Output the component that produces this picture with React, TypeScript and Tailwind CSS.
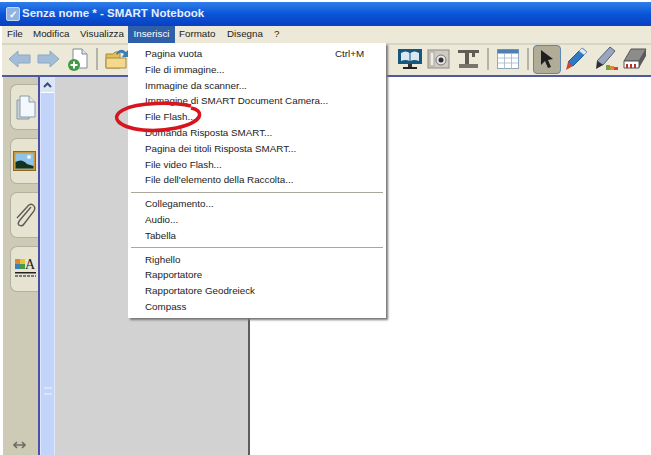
import React from 'react';

const font = { fontFamily: '"Liberation Sans", Tahoma, sans-serif' };

const menuBar = [
  { label: 'File', w: 'ml-[5px] w-[26px]' },
  { label: 'Modifica', w: 'w-[47px]' },
  { label: 'Visualizza', w: 'w-[48px]' },
];

const menuGroups: string[][] = [
  [
    'Pagina vuota',
    'File di immagine...',
    'Immagine da scanner...',
    'Immagine di SMART Document Camera...',
    'File Flash...',
    'Domanda Risposta SMART...',
    'Pagina dei titoli Risposta SMART...',
    'File video Flash...',
    "File dell'elemento della Raccolta...",
  ],
  ['Collegamento...', 'Audio...', 'Tabella'],
  ['Righello', 'Rapportatore', 'Rapportatore Geodreieck', 'Compass'],
];

const Arrow: React.FC<{ flip?: boolean }> = ({ flip }) => (
  <svg width="23" height="18" viewBox="0 0 23 18" className={flip ? '-scale-x-100' : ''}>
    <path d="M1 9 L10 1 V5 H22 V13 H10 V17 Z" fill="#a3bdd8" stroke="#8ba7c4" />
  </svg>
);

const NewPage = () => (
  <svg width="22" height="25" viewBox="0 0 22 25">
    <path d="M6 2 H15 L20 7 V21 H6 Z" fill="#fff" stroke="#7f8a99" />
    <path d="M15 2 V7 H20" fill="#dfe6ee" stroke="#7f8a99" />
    <circle cx="7" cy="18" r="6" fill="#3e9a45" />
    <path d="M7 14.5 V21.5 M3.5 18 H10.5" stroke="#fff" strokeWidth="2" />
  </svg>
);

const Folder = () => (
  <svg width="24" height="24" viewBox="0 0 24 24">
    <path d="M1 7 H8 L10 5 H15 V21 H1 Z" fill="#e5bd5c" stroke="#a98b3c" />
    <path d="M1 11 H21 V21 H1 Z" fill="#f2d98e" stroke="#a98b3c" />
    <path d="M11 6 Q16 0 21 5 L23 3 V10 H17 L19 7 Q15 4 12 8 Z" fill="#3b7fb8" />
  </svg>
);

const Display = () => (
  <svg width="26" height="24" viewBox="0 0 26 24">
    <rect x="1" y="2" width="24" height="15" fill="#16577f" />
    <path d="M4 6 Q9 3 12.5 6 V14 Q9 12 4 14 Z M13.5 6 Q17 3 22 6 V14 Q17 12 13.5 14 Z" fill="#d9e8f1" />
    <rect x="11" y="17" width="4" height="3" fill="#333" />
    <rect x="6" y="20" width="14" height="2" fill="#222" />
  </svg>
);

const Camera = () => (
  <svg width="23" height="22" viewBox="0 0 23 22">
    <rect x="1" y="2" width="21" height="18" fill="#cfcbc2" stroke="#8d8a83" />
    <rect x="3" y="4" width="4" height="14" fill="#eeece6" stroke="#a9a69f" />
    <circle cx="14" cy="12" r="5" fill="#e8e6e0" stroke="#777" />
    <circle cx="14" cy="12" r="2.5" fill="#2b3036" />
  </svg>
);

const DocCamera = () => (
  <svg width="23" height="22" viewBox="0 0 23 22">
    <path d="M1 2 H22 V5 H18 V9 H15 V5 H12 V17 H8 V5 H1 Z" fill="#5f5d56" />
    <rect x="2" y="16" width="19" height="4" fill="#76746c" />
  </svg>
);

const TableIcon = () => (
  <svg width="22" height="20" viewBox="0 0 22 20">
    <rect x="0.5" y="0.5" width="21" height="19" fill="#fff" stroke="#8fa6bd" />
    <rect x="0.5" y="0.5" width="21" height="4" fill="#4d7fb0" />
    <path d="M0 9 H22 M0 14 H22 M7.5 4 V20 M14.5 4 V20" stroke="#9fb4c8" strokeWidth="0.8" />
  </svg>
);

const Pointer = () => (
  <svg width="14" height="20" viewBox="0 0 14 20">
    <path d="M1 1 L13 10 L8 11 L11 18 L8 19 L5 12 L1 16 Z" fill="#1f1f1f" />
  </svg>
);

const Pen = () => (
  <svg width="24" height="26" viewBox="0 0 24 26">
    <path d="M17 2 L22 6 L8 20 L3 16 Z" fill="#2f78c4" stroke="#1f5b9c" />
    <path d="M17 2 L22 6 L19 9 L14 5 Z" fill="#dfe9f3" stroke="#7f9dbc" />
    <path d="M3 16 L8 20 L1 24 Z" fill="#c9473a" />
  </svg>
);

const Marker = () => (
  <svg width="26" height="26" viewBox="0 0 26 26">
    <path d="M16 1 L21 5 L9 19 L3 15 Z" fill="#9aa6c0" stroke="#555e73" />
    <path d="M3 15 L9 19 L2 23 Z" fill="#2d2d2d" />
    <rect x="12" y="19" width="4" height="5" fill="#6aa83f" />
    <rect x="16" y="20" width="4" height="4" fill="#e08a2e" />
    <rect x="20" y="21" width="4" height="3" fill="#c9473a" />
  </svg>
);

const Eraser = () => (
  <svg width="24" height="24" viewBox="0 0 24 24">
    <path d="M8 2 H23 L16 14 H1 Z" fill="#8c8c8c" stroke="#555" />
    <path d="M1 14 H16 V21 H1 Z" fill="#fff" stroke="#555" />
    <path d="M16 14 L23 2 V9 L16 21 Z" fill="#5a5a5a" />
    <path d="M4 17 V21 M8 17 V21 M12 17 V21" stroke="#b4332b" strokeWidth="2" />
  </svg>
);

const Sep = ({ ml }: { ml: string }) => <div className={`${ml} h-[22px] w-[2px] bg-[#b5b3a6]`} />;

const PageIcon = () => (
  <svg width="20" height="26" viewBox="0 0 20 26">
    <path d="M1 6 H13 V25 H1 Z" fill="#c5d2dc" stroke="#8a9aa8" />
    <path d="M4 2 H13 L19 8 V23 H4 Z" fill="#f3f8fc" stroke="#8a9aa8" />
    <path d="M13 2 V8 H19" fill="#dde6ee" stroke="#8a9aa8" />
  </svg>
);

const PictureIcon = () => (
  <svg width="23" height="20" viewBox="0 0 23 20">
    <rect x="0.5" y="0.5" width="22" height="19" fill="#c79a3f" stroke="#8d6a23" />
    <rect x="2.5" y="2.5" width="18" height="15" fill="#8fc4e8" />
    <path d="M2.5 17.5 V11 Q9 7 14 13 L20.5 15 V17.5 Z" fill="#12331f" />
    <circle cx="16" cy="6" r="2" fill="#eaf5fb" />
  </svg>
);

const ClipIcon = () => (
  <svg width="22" height="26" viewBox="0 0 22 26" fill="none" stroke="#5c5c56" strokeWidth="1.4">
    <path d="M17 5 L6 18 Q3 22 5 23 Q8 25 10 22 L20 9 Q22 5 19 3 Q16 1 13 5 L3 16" />
  </svg>
);

const GalleryIcon = () => (
  <svg width="21" height="24" viewBox="0 0 21 24">
    <rect x="0" y="2" width="5" height="5" fill="#d68a2a" />
    <rect x="5" y="2" width="5" height="5" fill="#e5c53a" />
    <rect x="0" y="7" width="5" height="5" fill="#3d7ec1" />
    <rect x="5" y="7" width="5" height="5" fill="#4a9a4a" />
    <text x="10" y="12" fontFamily="Liberation Serif, serif" fontSize="14" fill="#222">A</text>
    <rect x="0" y="15" width="21" height="1.5" fill="#222" />
    <path d="M0 19 H21" stroke="#555" strokeDasharray="3 1" strokeWidth="1.5" />
  </svg>
);

const RailTab: React.FC<{ children: React.ReactNode }> = ({ children }) => (
  <div className="ml-[7px] flex h-[46px] w-[28px] items-center justify-end rounded-l-[7px] border border-r-0 border-[#b3b19f] bg-[#e6e3d1] pr-[2px]">
    {children}
  </div>
);

export default function App() {
  return (
    <div className="relative flex h-[455px] w-[651px] flex-col overflow-hidden bg-white text-[9.8px] text-[#1c1c1c]" style={font}>
      {/* Title bar */}
      <div className="mt-[2px] flex h-[24px] items-center bg-gradient-to-b from-[#2f7ee8] via-[#0a55d8] to-[#0a3fc0] pl-[6px] text-[11.5px] font-bold text-[#e8eefa]">
        <div className="mr-[2px] flex h-[14px] w-[14px] items-center justify-center rounded-[2px] border border-[#c8d8f0] bg-[#8fb4e4] text-[10px] text-white">✓</div>
        Senza nome * - SMART Notebook
      </div>

      {/* Menu bar */}
      <div className="ml-[2px] flex h-[17px] items-center bg-[#ece9d8]">
        {menuBar.map((m) => (
          <span key={m.label} className={m.w}>{m.label}</span>
        ))}
        <span className="flex h-[17px] w-[47px] items-center justify-center bg-[#2f5fa8] text-white">Inserisci</span>
        <span className="ml-[4px] w-[48px]">Formato</span>
        <span className="w-[47px]">Disegna</span>
        <span>?</span>
      </div>

      {/* Toolbar */}
      <div className="ml-[2px] flex h-[34px] items-center border-b-2 border-[#4d5aa0] bg-[#ece9d8] shadow-[inset_0_2px_0_#d8d5c4]">
        <div className="ml-[6px]"><Arrow /></div>
        <div className="ml-[6px]"><Arrow flip /></div>
        <div className="ml-[7px]"><NewPage /></div>
        <Sep ml="ml-[7px]" />
        <div className="ml-[7px]"><Folder /></div>
        <div className="ml-[268px]"><Display /></div>
        <div className="ml-[4px]"><Camera /></div>
        <div className="ml-[7px]"><DocCamera /></div>
        <Sep ml="ml-[7px]" />
        <div className="ml-[8px]"><TableIcon /></div>
        <Sep ml="ml-[8px]" />
        <div className="ml-[4px] flex h-[29px] w-[28px] items-center justify-center rounded-[4px] border border-[#5d86b5] bg-[#b0ac98]"><Pointer /></div>
        <div className="ml-[4px]"><Pen /></div>
        <div className="ml-[5px]"><Marker /></div>
        <div className="ml-[3px]"><Eraser /></div>
      </div>

      {/* Body */}
      <div className="ml-[3px] flex min-h-0 flex-1">
        <div className="relative flex w-[35px] flex-col gap-[8px] bg-[#cdcab6] pt-[7px]">
          <RailTab><PageIcon /></RailTab>
          <RailTab><PictureIcon /></RailTab>
          <RailTab><ClipIcon /></RailTab>
          <RailTab><GalleryIcon /></RailTab>
          <svg className="absolute bottom-[6px] left-[10px]" width="13" height="8" viewBox="0 0 13 8" fill="none" stroke="#6e6e64" strokeWidth="1.6">
            <path d="M4 1 L1 4 L4 7 M9 1 L12 4 L9 7 M1 4 H12" />
          </svg>
        </div>
        <div className="w-[2px] bg-[#4d4fa8]" />
        <div className="flex w-[15px] flex-col border-x border-[#dfe8fb] bg-[#c3d4fb]">
          <div className="flex h-[16px] items-center justify-center border-b border-white bg-[#dbe5f5]">
            <svg width="9" height="6" viewBox="0 0 9 6" fill="none" stroke="#34507f" strokeWidth="2"><path d="M1 5 L4.5 1.5 L8 5" /></svg>
          </div>
          <div className="mx-auto mt-[294px] h-[8px] w-[8px] border-y-2 border-[#dbe5f5]" />
        </div>
        <div className="w-[195px] border-r-2 border-[#5c5c5c] bg-[#d2d2d2]" />
        <div className="flex-1 bg-white" />
      </div>

      {/* Open menu */}
      <div className="absolute left-[128px] top-[43px] h-[275px] w-[258px] bg-white pt-[3px] shadow-[2px_2px_2px_#777]">
        <div className="absolute left-[207px] top-[3px] leading-[15.8px]">Ctrl+M</div>
        {menuGroups.map((group, i) => (
          <div key={i}>
            {i > 0 && <div className="mx-[3px] my-[3.5px] h-[1px] bg-[#a9a79c]" />}
            {group.map((item) => (
              <div key={item} className="h-[15.8px] pl-[17px] leading-[15.8px]">{item}</div>
            ))}
          </div>
        ))}
      </div>

      {/* Red circle */}
      <svg className="absolute left-[113px] top-[101px]" width="90" height="32" viewBox="0 0 90 32" fill="none">
        <path d="M78 5 C60 1 25 1 10 9 C-3 16 4 26 30 29 C50 31 80 26 86 16 C88 11 84 8 78 7" stroke="#d8141e" strokeWidth="3.5" />
      </svg>
    </div>
  );
}
